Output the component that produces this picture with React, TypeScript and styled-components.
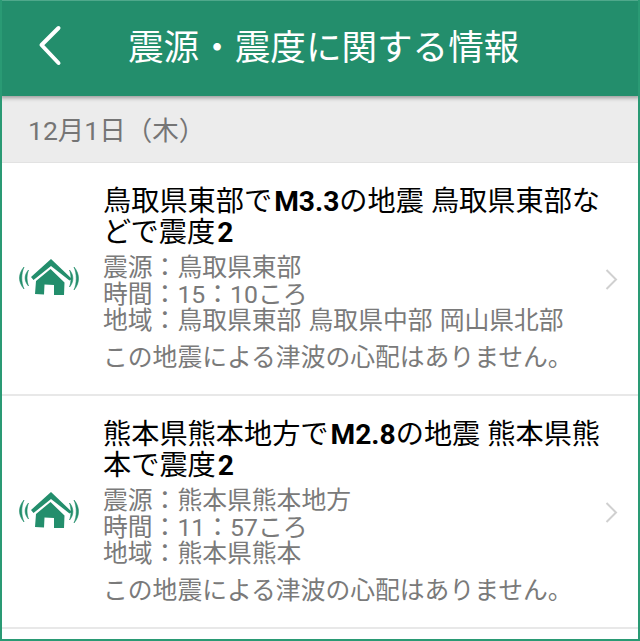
import styled, { createGlobalStyle } from 'styled-components';

const GlobalStyle = createGlobalStyle`
  html, body {
    margin: 0;
    padding: 0;
    background: #fff;
  }
`;

const Frame = styled.div`
  box-sizing: border-box;
  width: 640px;
  height: 641px;
  overflow: hidden;
  border: 2px solid #2a9a74;
  border-top: 0;
  font-family: 'Roboto', 'Noto Sans CJK JP', sans-serif;
  background: #fff;
`;

const Header = styled.header`
  position: relative;
  z-index: 1;
  height: 96px;
  box-sizing: border-box;
  margin: 0 -2px;
  padding-bottom: 8px;
  display: flex;
  align-items: center;
  background: #238e6c;
  border-top: 1px solid #4fa88b;
  box-shadow: 0 2px 4px rgba(0, 0, 0, 0.35);
`;

const BackButton = styled.div`
  width: 128px;
  flex: none;
  display: flex;
  padding: 3px 0 0 37px;
  box-sizing: border-box;
`;

const Title = styled.h1`
  margin: 0;
  font-size: 35.6px;
  font-weight: 400;
  color: #fff;
  white-space: nowrap;
`;

const DateBand = styled.div`
  height: 67px;
  box-sizing: border-box;
  padding: 0 0 2px 26px;
  display: flex;
  align-items: center;
  background: #ececec;
  border-bottom: 1px solid #e2e2e2;
  color: #757575;
  font-size: 26.5px;
`;

const Row = styled.div`
  height: 231px;
  display: flex;
  align-items: center;
  border-bottom: 2px solid #e8e8e8;
`;

const IconCell = styled.div`
  width: 101px;
  flex: none;
  padding: 2px 0 0 16px;
  box-sizing: border-box;
`;

const Content = styled.div`
  width: 501px;
  flex: none;
`;

const ItemTitle = styled.div`
  font-size: 28.2px;
  line-height: 31px;
  color: #000;
  margin-bottom: 7px;

  b {
    font-weight: 700;
    margin-left: 2px;
  }
`;

const Detail = styled.div`
  font-size: 24.8px;
  line-height: 26.5px;
  word-spacing: 1px;
  color: #7a7a7a;
  white-space: nowrap;
`;

const Notice = styled(Detail)`
  margin-top: 10px;
`;

const Chevron = styled.div`
  flex: none;
  display: flex;
`;

const HouseIcon = () => (
  <svg width="66" height="44" viewBox="0 0 66 44">
    <g fill="#238e6c">
      <path d="M6 11 C0 18 0 26 6 33 C3 26 3 18 6 11 Z" stroke="#238e6c" strokeWidth="0.6" />
      <path d="M10.5 14 C6 19 6 25 10.5 30 C8.5 25 8.5 19 10.5 14 Z" stroke="#238e6c" strokeWidth="0.6" />
      <path d="M56 11 C62 18 62 27 56 34 C59 27 59 18 56 11 Z" stroke="#238e6c" strokeWidth="0.6" />
      <path d="M51.5 14 C56 19 56 26 51.5 31 C53.5 26 53.5 19 51.5 14 Z" stroke="#238e6c" strokeWidth="0.6" />
      <path d="M33 3 L13 21 L15.5 24 L33 10 L51.5 24.5 L54 23 Z" />
      <path d="M32.5 13 L18 25 L17 38 L26 38.5 L26.5 28.5 L36 29 L36 39 L46 39 L46.5 26.5 Z" />
    </g>
  </svg>
);

const ChevronIcon = () => (
  <svg width="14" height="24" viewBox="0 0 14 24">
    <path d="M2.5 3 L12 12.5 L2.5 22" fill="none" stroke="#d0d0d0" strokeWidth="2" />
  </svg>
);

const quakes = [
  {
    before: '鳥取県東部で',
    magnitude: 'M3.3',
    after: 'の地震 鳥取県東部などで震度',
    intensity: '2',
    source: '鳥取県東部',
    time: '15：10ころ',
    area: '鳥取県東部 鳥取県中部 岡山県北部',
  },
  {
    before: '熊本県熊本地方で',
    magnitude: 'M2.8',
    after: 'の地震 熊本県熊本で震度',
    intensity: '2',
    source: '熊本県熊本地方',
    time: '11：57ころ',
    area: '熊本県熊本',
  },
];

const App = () => {
  return (
    <Frame>
      <GlobalStyle />
      <Header>
        <BackButton>
          <svg width="26" height="44" viewBox="0 0 26 44">
            <path
              d="M21.5 4 L4.5 21 L21.5 39"
              fill="none"
              stroke="#fff"
              strokeWidth="4"
              strokeLinecap="round"
              strokeLinejoin="round"
            />
          </svg>
        </BackButton>
        <Title>震源・震度に関する情報</Title>
      </Header>
      <DateBand>12月1日（木）</DateBand>
      {quakes.map((q) => (
        <Row key={q.magnitude}>
          <IconCell>
            <HouseIcon />
          </IconCell>
          <Content>
            <ItemTitle>
              {q.before}
              <b>{q.magnitude}</b>
              {q.after}
              <b>{q.intensity}</b>
            </ItemTitle>
            <Detail>震源：{q.source}</Detail>
            <Detail>時間：{q.time}</Detail>
            <Detail>地域：{q.area}</Detail>
            <Notice>この地震による津波の心配はありません。</Notice>
          </Content>
          <Chevron>
            <ChevronIcon />
          </Chevron>
        </Row>
      ))}
    </Frame>
  );
};

export default App;
